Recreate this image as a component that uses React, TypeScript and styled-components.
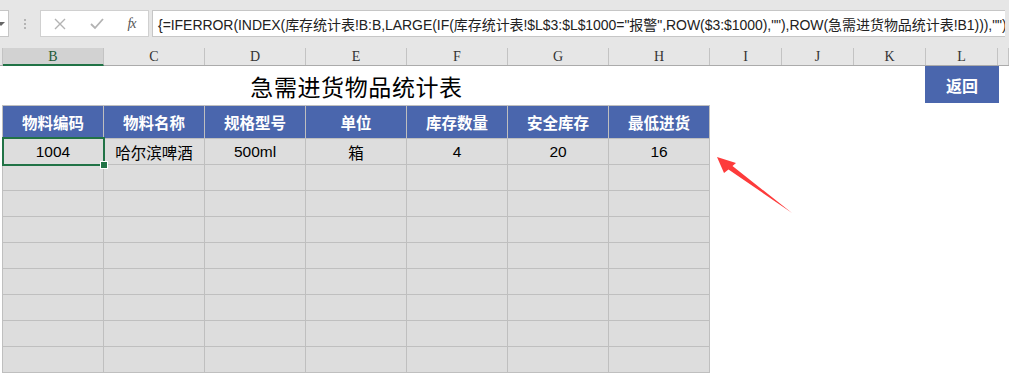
import React from "react";
import styled, { createGlobalStyle } from "styled-components";

const GlobalStyle = createGlobalStyle`
  html, body { margin: 0; padding: 0; background: #ffffff; overflow: hidden; }
  body { font-family: "Liberation Sans", "Noto Sans CJK SC", sans-serif; }
  * { box-sizing: border-box; }
`;

const BLUE = "#4a66ad";
const GRID = "#bfbfbf";
const CELL = "#dddddd";
const GREEN = "#217346";

const Page = styled.div`
  position: relative;
  width: 1009px;
  height: 373px;
  overflow: hidden;
  background: #fff;
`;

const Toolbar = styled.div`
  height: 48px;
  background: #e6e6e6;
  display: flex;
  align-items: flex-start;
  padding-top: 10px;
`;

const NameBoxStub = styled.div`
  width: 9px;
  height: 27px;
  background: #fff;
  border: 1px solid #c6c6c6;
  border-left: none;
  position: relative;
  overflow: hidden;
  &::after {
    content: "";
    position: absolute;
    left: -3px;
    top: 11px;
    border-left: 4px solid transparent;
    border-right: 4px solid transparent;
    border-top: 4px solid #666;
  }
`;

const Grip = styled.div`
  width: 31px;
  height: 27px;
  display: flex;
  flex-direction: column;
  align-items: center;
  justify-content: center;
  gap: 2px;
  & span {
    width: 2px;
    height: 2px;
    background: #b4b4b4;
  }
`;

const EditBox = styled.div`
  width: 109px;
  height: 27px;
  background: #fff;
  border: 1px solid #d0d0d0;
  display: flex;
  align-items: center;
`;

const EditIcon = styled.span<{ $w: number }>`
  width: ${(p) => p.$w}px;
  display: flex;
  justify-content: center;
  align-items: center;
`;

const FxLabel = styled.span`
  font-family: "Liberation Serif", "DejaVu Serif", serif;
  font-style: italic;
  font-size: 14px;
  color: #555;
  letter-spacing: -1px;
`;

const FormulaBox = styled.div`
  margin-left: 3px;
  width: 853px;
  height: 27px;
  background: #fff;
  border: 1px solid #c6c6c6;
  border-right: none;
  padding-left: 5px;
  display: flex;
  align-items: center;
  font-size: 14px;
  color: #222;
  white-space: nowrap;
  overflow: hidden;
  letter-spacing: -0.05px;
`;

const colTemplate = "3px repeat(7, 101px) repeat(4, 72px) 1fr";

const ColHeaderRow = styled.div`
  display: grid;
  grid-template-columns: ${colTemplate};
  height: 18px;
  background: #e6e6e6;
  border-bottom: 1px solid #ababab;
`;

const ColHeader = styled.div<{ $selected?: boolean }>`
  border-right: 1px solid #c3c3c3;
  background: ${(p) => (p.$selected ? "#d2d2d2" : "#e6e6e6")};
  border-bottom: ${(p) => (p.$selected ? `2px solid ${GREEN}` : "none")};
  margin-bottom: ${(p) => (p.$selected ? "-1px" : "0")};
  display: flex;
  align-items: center;
  justify-content: center;
  font-family: "Liberation Serif", "DejaVu Serif", serif;
  font-size: 14px;
  color: ${(p) => (p.$selected ? "#1e5a36" : "#333")};
  line-height: 1;
  padding-top: 1px;
`;

const TitleRow = styled.div`
  display: grid;
  grid-template-columns: ${colTemplate};
  height: 39px;
`;

const Title = styled.div`
  grid-column: 2 / 9;
  display: flex;
  align-items: center;
  justify-content: center;
  font-family: "Noto Sans CJK SC", sans-serif;
  font-size: 23px;
  color: #000;
  padding-top: 1px;
  letter-spacing: 0.6px;
`;

const BackButton = styled.div`
  grid-column: 12;
  margin: 0 -1px 2px -1px;
  background: ${BLUE};
  color: #fff;
  display: flex;
  align-items: center;
  justify-content: center;
  font-family: "Noto Sans CJK SC", sans-serif;
  font-weight: 700;
  font-size: 16px;
`;

const Table = styled.div`
  margin-left: 2px;
  width: 708px;
  display: grid;
  grid-template-columns: repeat(7, 100px);
  grid-template-rows: 32px repeat(9, 25px);
  gap: 1px;
  padding: 1px;
  background: ${GRID};
`;

const HeadCell = styled.div`
  background: ${BLUE};
  color: #fff;
  display: flex;
  align-items: center;
  justify-content: center;
  font-family: "Noto Sans CJK SC", sans-serif;
  font-weight: 700;
  font-size: 15.5px;
`;

const DataCell = styled.div`
  position: relative;
  background: ${CELL};
  display: flex;
  align-items: center;
  justify-content: center;
  font-family: "Liberation Sans", "Noto Sans CJK SC", sans-serif;
  font-size: 15.5px;
  color: #000;
  padding-top: 1px;
`;

const Selection = styled.div`
  position: absolute;
  z-index: 2;
  left: -1px;
  top: -2px;
  right: -2px;
  bottom: -2px;
  border: 2px solid ${GREEN};
  pointer-events: none;
`;

const FillHandle = styled.div`
  position: absolute;
  right: -4px;
  bottom: -4px;
  width: 6px;
  height: 6px;
  background: ${GREEN};
  box-shadow: 0 0 0 1px #fff;
`;

const ArrowOverlay = styled.svg`
  position: absolute;
  left: 700px;
  top: 140px;
`;

const headers = ["物料编码", "物料名称", "规格型号", "单位", "库存数量", "安全库存", "最低进货"];
const firstRow = ["1004", "哈尔滨啤酒", "500ml", "箱", "4", "20", "16"];
const columns = ["", "B", "C", "D", "E", "F", "G", "H", "I", "J", "K", "L", ""];

const formula =
  '{=IFERROR(INDEX(库存统计表!B:B,LARGE(IF(库存统计表!$L$3:$L$1000="报警",ROW($3:$1000),""),ROW(急需进货物品统计表!B1))),"")}';

export default function App() {
  const emptyRows = Array.from({ length: 8 });
  return (
    <Page>
      <GlobalStyle />
      <Toolbar>
        <NameBoxStub />
        <Grip>
          <span />
          <span />
          <span />
        </Grip>
        <EditBox>
          <EditIcon $w={37}>
            <svg width="12" height="12" viewBox="0 0 12 12">
              <path d="M1 1 L11 11 M11 1 L1 11" stroke="#b3b3b3" strokeWidth="1.4" fill="none" />
            </svg>
          </EditIcon>
          <EditIcon $w={37}>
            <svg width="14" height="12" viewBox="0 0 14 12">
              <path d="M1 6 L5 10 L13 1" stroke="#b3b3b3" strokeWidth="1.8" fill="none" />
            </svg>
          </EditIcon>
          <EditIcon $w={33}>
            <FxLabel>fx</FxLabel>
          </EditIcon>
        </EditBox>
        <FormulaBox>{formula}</FormulaBox>
      </Toolbar>
      <ColHeaderRow>
        {columns.map((c, i) => (
          <ColHeader key={i} $selected={c === "B"}>
            {c}
          </ColHeader>
        ))}
      </ColHeaderRow>
      <TitleRow>
        <Title>急需进货物品统计表</Title>
        <BackButton>返回</BackButton>
      </TitleRow>
      <Table>
        {headers.map((h) => (
          <HeadCell key={h}>{h}</HeadCell>
        ))}
        {firstRow.map((v, i) => (
          <DataCell key={"r" + i}>
            {v}
            {i === 0 && (
              <Selection>
                <FillHandle />
              </Selection>
            )}
          </DataCell>
        ))}
        {emptyRows.map((_, r) =>
          headers.map((_, c) => <DataCell key={`e${r}-${c}`} />)
        )}
      </Table>
      <ArrowOverlay width="110" height="90" viewBox="0 0 110 90">
        <polygon
          points="17,17 36,23 32.5,26 92,73 28.5,29.5 24,33"
          fill="#fd3b3b"
        />
      </ArrowOverlay>
    </Page>
  );
}
